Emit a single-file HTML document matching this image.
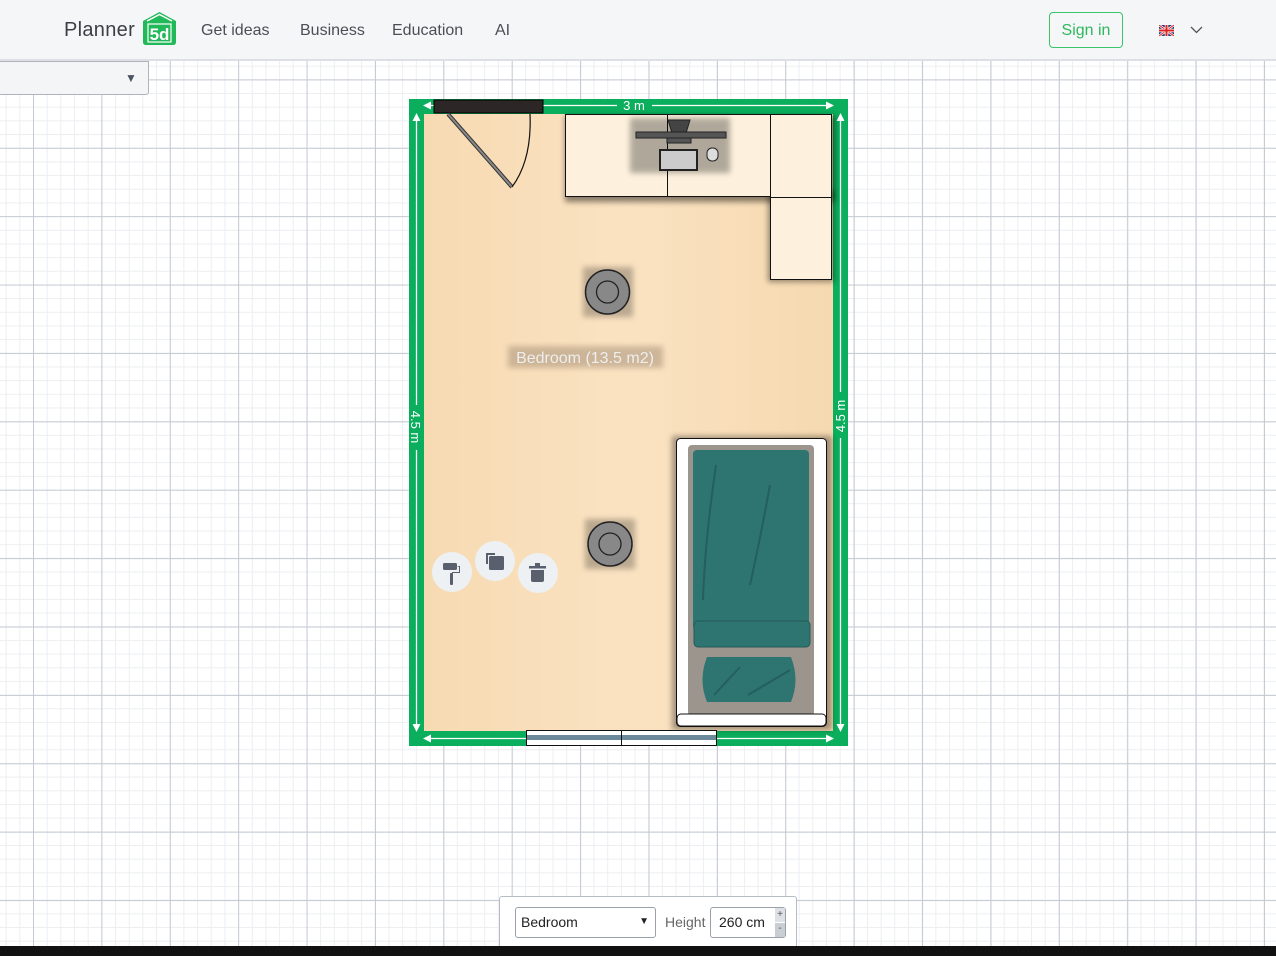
<!DOCTYPE html>
<html><head><meta charset="utf-8"><style>
*{margin:0;padding:0;box-sizing:border-box}
body{width:1276px;height:956px;overflow:hidden;position:relative;font-family:"Liberation Sans","DejaVu Sans",sans-serif;background:#fff}
.grid{position:absolute;left:0;top:61px;width:1276px;height:885px;
background-color:#fff;
background-image:
linear-gradient(to right,#c4cad3 1px,transparent 1px),
linear-gradient(to bottom,#c4cad3 1px,transparent 1px),
linear-gradient(to right,#eceef1 1px,transparent 1px),
linear-gradient(to bottom,#eceef1 1px,transparent 1px);
background-size:68.4px 68.4px,68.4px 68.4px,13.68px 13.68px,13.68px 13.68px;
background-position:33px -50px,33px -50px,33px -50px,33px -50px}
.hdr{position:absolute;left:0;top:0;width:1276px;height:61px;background:#f5f6f8;border-bottom:2px solid #dcdfe3}
.nav{position:absolute;top:22px;font-size:16px;color:#4a4f55}
.sel{position:absolute;left:-2px;top:61px;width:151px;height:34px;background:#f4f5f6;border:1px solid #aeb4bb;border-radius:0 0 3px 0}
.bot{position:absolute;left:0;top:946px;width:1276px;height:10px;background:#111}
.panel{position:absolute;left:499px;top:896px;width:298px;height:52px;background:#fff;border:1px solid #b5bcc4;border-radius:3px 3px 0 0}
</style></head><body>
<div class="grid"></div>
<div class="hdr">
 <div style="position:absolute;left:64px;top:19px;font-size:20px;color:#3b3f44;letter-spacing:0.3px">Planner</div>
 <svg style="position:absolute;left:143px;top:12px" width="33" height="33" viewBox="0 0 33 33"><path d="M0 9 L16.5 0 L33 9 V30 Q33 33 30 33 H3 Q0 33 0 30Z" fill="#22b95a"/><path d="M4 9 L16.5 2.5 L29 9" stroke="#fff" stroke-width="1.5" fill="none"/><rect x="5" y="12" width="23" height="18" fill="none" stroke="#fff" stroke-width="1.2"/><text x="16.5" y="28" text-anchor="middle" font-size="17" fill="#fff" font-family="Liberation Sans" font-weight="bold">5d</text></svg>
 <div class="nav" style="left:201px">Get ideas</div>
 <div class="nav" style="left:300px">Business</div>
 <div class="nav" style="left:392px">Education</div>
 <div class="nav" style="left:495px">AI</div>
 <div style="position:absolute;left:1049px;top:12px;width:74px;height:36px;border:1px solid #3cc46a;border-radius:4px;color:#2fb85d;font-size:16px;text-align:center;line-height:36px">Sign in</div>
 <svg style="position:absolute;left:1159px;top:25px" width="15" height="11" viewBox="0 0 15 11"><rect width="15" height="11" fill="#1d3b7a"/><path d="M0 0L15 11M15 0L0 11" stroke="#fff" stroke-width="2.5"/><path d="M0 0L15 11M15 0L0 11" stroke="#d22" stroke-width="1"/><path d="M7.5 0V11M0 5.5H15" stroke="#fff" stroke-width="3.5"/><path d="M7.5 0V11M0 5.5H15" stroke="#d22" stroke-width="2"/></svg>
 <svg style="position:absolute;left:1190px;top:26px" width="13" height="8" viewBox="0 0 13 8"><path d="M1 1L6.5 6.5L12 1" stroke="#555" stroke-width="1.3" fill="none"/></svg>
</div>
<div class="sel"><span style="position:absolute;left:126px;top:9px;font-size:12px;color:#4a5560">▼</span></div>

<svg style="position:absolute;left:0;top:0" width="1276" height="956">
 <defs>
  <linearGradient id="wood" x1="0" x2="1"><stop offset="0" stop-color="#f7dab2"/><stop offset="0.5" stop-color="#fae2c1"/><stop offset="1" stop-color="#f6d9b0"/></linearGradient>
  <filter id="sh" x="-20%" y="-20%" width="140%" height="140%"><feGaussianBlur stdDeviation="3"/></filter>
 </defs>
 <rect x="409" y="99" width="439" height="647" fill="#0aae5c"/>
 <rect x="424" y="114" width="409" height="617" fill="url(#wood)"/>
 <g stroke="#fff" stroke-width="1.3" fill="#fff">
  <line x1="428" y1="105.5" x2="617" y2="105.5"/><line x1="652" y1="105.5" x2="828" y2="105.5"/>
  <line x1="428" y1="738.5" x2="828" y2="738.5"/>
  <line x1="416.5" y1="120" x2="416.5" y2="405"/><line x1="416.5" y1="450" x2="416.5" y2="725"/>
  <line x1="840.5" y1="120" x2="840.5" y2="392"/><line x1="840.5" y1="438" x2="840.5" y2="725"/>
  <path d="M423 105.5l8-4v8zM834 105.5l-8-4v8zM423 738.5l8-4v8zM834 738.5l-8-4v8zM416.5 113l-4 8h8zM416.5 732l-4-8h8zM840.5 113l-4 8h8zM840.5 732l-4-8h8z" stroke="none"/>
 </g>
 <text x="634" y="110" font-size="13" fill="#fff" text-anchor="middle">3 m</text>
 <text transform="translate(411,427) rotate(90)" font-size="13" fill="#fff" text-anchor="middle">4.5 m</text>
 <text transform="translate(845,416) rotate(-90)" font-size="13" fill="#fff" text-anchor="middle">4.5 m</text>
 <rect x="434" y="100" width="109" height="13" fill="#2d2626" stroke="#000"/>
 <line x1="448" y1="114" x2="512" y2="187" stroke="#333" stroke-width="4"/>
 <line x1="448" y1="114" x2="512" y2="187" stroke="#888" stroke-width="2"/>
 <path d="M512 187 Q532 160 530 114" stroke="#111" stroke-width="1.2" fill="none"/>
 <rect x="565" y="116" width="270" height="86" fill="#000" opacity="0.45" filter="url(#sh)"/>
 <rect x="768" y="190" width="66" height="92" fill="#000" opacity="0.4" filter="url(#sh)"/>
 <rect x="565.5" y="114.5" width="205" height="82" fill="#fdf1dd" stroke="#111"/>
 <line x1="667.5" y1="114" x2="667.5" y2="197" stroke="#111"/>
 <rect x="770.5" y="114.5" width="61" height="165" fill="#fdf1dd" stroke="#111"/>
 <line x1="770" y1="197.5" x2="832" y2="197.5" stroke="#111"/>
 <rect x="630" y="118" width="100" height="55" fill="#000" opacity="0.3" filter="url(#sh)"/>
 <path d="M668 120 H690 L686 133 H672Z" fill="#444" stroke="#222"/>
 <rect x="636" y="132" width="90" height="6" fill="#555" stroke="#222"/>
 <rect x="667" y="138" width="24" height="5" fill="#555" stroke="#222"/>
 <rect x="660" y="150" width="37" height="20" fill="#ccc" stroke="#222" stroke-width="2"/>
 <rect x="707" y="148" width="11" height="13" rx="5" fill="#ddd" stroke="#222"/>
 <g><rect x="583" y="267" width="50" height="50" fill="#000" opacity="0.25" filter="url(#sh)"/>
 <circle cx="607.5" cy="292" r="22" fill="#888" stroke="#222" stroke-width="1.5"/><circle cx="607.5" cy="292" r="11" fill="none" stroke="#222" stroke-width="1.3"/></g>
 <g><rect x="585" y="519" width="50" height="50" fill="#000" opacity="0.25" filter="url(#sh)"/>
 <circle cx="610" cy="544" r="22" fill="#888" stroke="#222" stroke-width="1.5"/><circle cx="610" cy="544" r="11" fill="none" stroke="#222" stroke-width="1.3"/></g>
 <rect x="508" y="346" width="155" height="22" fill="#8a7560" opacity="0.4" filter="url(#sh)"/>
 <text x="585" y="363" font-size="16" fill="#eee" text-anchor="middle">Bedroom (13.5 m2)</text>
 <rect x="672" y="436" width="160" height="294" fill="#000" opacity="0.35" filter="url(#sh)"/>
 <rect x="676.5" y="438.5" width="150" height="288" rx="4" fill="#fff" stroke="#111"/>
 <rect x="688" y="445" width="126" height="271" rx="4" fill="#9c958d"/>
 <rect x="693" y="450" width="116" height="180" rx="4" fill="#2e7572"/>
 <rect x="694" y="621" width="116" height="26" rx="4" fill="#2e7572" stroke="#245a58"/>
 <path d="M707 657 H791 Q800 680 791 702 H707 Q698 680 707 657Z" fill="#2e7572"/>
 <path d="M716 465 Q705 540 703 600M770 485 Q760 540 750 585M714 695 L740 667M748 695 L790 670" stroke="#245f5c" stroke-width="2" fill="none"/>
 <rect x="677" y="714" width="149" height="12" rx="4" fill="#fff" stroke="#111"/>
 <rect x="526.5" y="730.5" width="190" height="15" fill="#fff" stroke="#111"/>
 <rect x="527" y="735" width="189" height="5" fill="#6a8a9c"/>
 <line x1="621.5" y1="730" x2="621.5" y2="746" stroke="#111"/>
 <g fill="#eef1f3"><circle cx="452" cy="572" r="20"/><circle cx="495" cy="561" r="20"/><circle cx="538" cy="573" r="20"/></g>
 <g fill="#5a5f6e">
  <rect x="443" y="563" width="14" height="7" rx="1.5"/><path d="M457 566h3v7h-7v3h-1v-4h7v-5z"/><rect x="450" y="573" width="3" height="12" rx="1"/>
  <path d="M486 553h9v2h-7v9h-2z"/><rect x="489" y="556" width="15" height="14" rx="1.5"/>
  <rect x="529" y="566" width="17" height="2.5"/><rect x="535" y="563" width="5" height="3"/><path d="M531 570h13v10a2 2 0 0 1-2 2h-9a2 2 0 0 1-2-2z"/>
 </g>
</svg>

<div class="panel">
 <div style="position:absolute;left:15px;top:10px;width:141px;height:31px;border:1px solid #9aa1a8;border-radius:3px;font-size:14px;color:#222;padding:6px 0 0 5px">Bedroom<span style="position:absolute;right:6px;top:8px;font-size:10px">▼</span></div>
 <div style="position:absolute;left:165px;top:17px;font-size:14px;color:#666">Height</div>
 <div style="position:absolute;left:210px;top:10px;width:76px;height:31px;border:1px solid #9aa1a8;border-radius:3px;font-size:14px;color:#222;padding:6px 0 0 8px">260 cm
  <div style="position:absolute;right:0;top:0;width:10px;height:14px;background:#dde1e5;font-size:10px;line-height:14px;text-align:center;color:#555">+</div>
  <div style="position:absolute;right:0;top:15px;width:10px;height:14px;background:#c9ced4;font-size:10px;line-height:12px;text-align:center;color:#555">-</div>
 </div>
</div>
<div class="bot"></div>
</body></html>
